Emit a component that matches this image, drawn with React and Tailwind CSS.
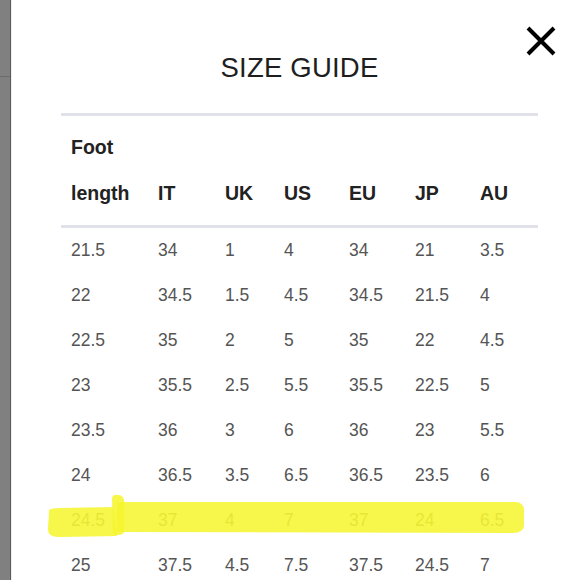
import React from "react";

const cols = ["w-[87px]", "w-[67px]", "w-[59px]", "w-[65px]", "w-[66px]", "w-[65px]", "flex-1"];

const heads = ["length", "IT", "UK", "US", "EU", "JP", "AU"];

const rows = [
  ["21.5", "34", "1", "4", "34", "21", "3.5"],
  ["22", "34.5", "1.5", "4.5", "34.5", "21.5", "4"],
  ["22.5", "35", "2", "5", "35", "22", "4.5"],
  ["23", "35.5", "2.5", "5.5", "35.5", "22.5", "5"],
  ["23.5", "36", "3", "6", "36", "23", "5.5"],
  ["24", "36.5", "3.5", "6.5", "36.5", "23.5", "6"],
  ["24.5", "37", "4", "7", "37", "24", "6.5"],
  ["25", "37.5", "4.5", "7.5", "37.5", "24.5", "7"],
];

const Highlight = () => (
  <svg
    className="absolute left-0 top-0 overflow-visible pointer-events-none"
    width="476"
    height="45"
    viewBox="0 0 476 45"
  >
    <g fill="#f6f42c" fillOpacity="0.86">
      <path d="M-12 14 Q-14 10 0 10 L52 9 L56 38 L0 39 Q-14 40 -13 30 Z" />
      <path d="M56 4 L455 4 Q464 5 463 14 L463 28 Q462 35 452 35 L56 34 Z" />
      <path d="M51 0 Q52 -4 57 -3 Q62 -3 63 2 L63 34 Q62 37 57 37 Q52 37 52 33 Z" />
    </g>
  </svg>
);

export default function App() {
  return (
    <div className="flex w-[580px] h-[580px] overflow-hidden bg-white font-['Liberation_Sans',Arial,sans-serif]">
      <div className="flex flex-col w-[11px] bg-[#808080] border-r border-[#5c5c5c]">
        <div className="h-[77px] border-b border-[#6a6a6a]" />
      </div>
      <div className="relative flex-1 border-l border-[#ececec] pl-[49px] pr-[42px]">
        <button className="absolute right-[24px] top-[26px] text-black">
          <svg width="30" height="30" viewBox="0 0 30 30">
            <path d="M2 2 L28 28 M28 2 L2 28" stroke="#000" strokeWidth="4" />
          </svg>
        </button>
        <h1 className="pt-[52px] h-[113px] text-center text-[27.5px] leading-[32px] text-[#1e1e1e] tracking-[0.2px]">
          SIZE GUIDE
        </h1>
        <div className="border-t-[3px] border-[#e1e1ea]" />
        <div className="flex items-end pt-[8px] pb-[9px] text-[19.5px] font-bold leading-[46px] text-[#222]">
          {heads.map((h, i) => (
            <div key={i} className={`${cols[i]} pl-[10px]`}>
              {i === 0 ? (
                <>
                  Foot
                  <br />
                  length
                </>
              ) : (
                h
              )}
            </div>
          ))}
        </div>
        <div className="border-t-[3px] border-[#e1e1ea]" />
        {rows.map((r, ri) => (
          <div
            key={ri}
            className={`relative flex items-center h-[45px] text-[17.5px] ${
              ri === 6 ? "text-[#8a8a70]" : "text-[#555]"
            }`}
          >
            {r.map((c, i) => (
              <div key={i} className={`${cols[i]} pl-[10px]`}>
                {c}
              </div>
            ))}
            {ri === 6 && <Highlight />}
          </div>
        ))}
      </div>
    </div>
  );
}
